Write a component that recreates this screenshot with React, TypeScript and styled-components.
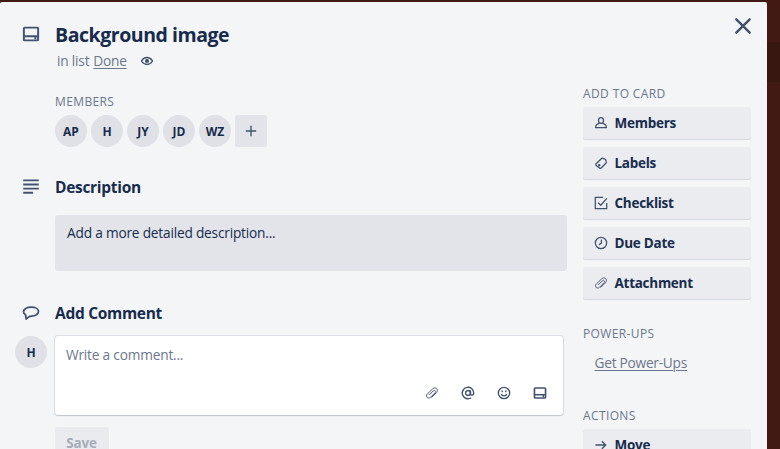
import React from 'react';
import styled, { createGlobalStyle } from 'styled-components';

const GlobalStyle = createGlobalStyle`
  *, *::before, *::after { box-sizing: border-box; }
  html, body { margin: 0; height: 100%; overflow: hidden; }
  body {
    background: linear-gradient(#421a13 0 42px, #381710 42px 82px, #421a13 82px);
    color: #172b4d;
    font: 400 13.7px/20px "Open Sans", "Noto Sans", sans-serif;
    letter-spacing: -0.2px;
  }
  h2, h3, h4, p { margin: 0; }
  button { font: inherit; color: inherit; border: 0; letter-spacing: inherit; }
`;

const CardWindow = styled.main`
  display: flex;
  width: 767px;
  height: 460px;
  margin-top: 2px;
  background: #f4f5f7;
  border-radius: 2px;
  overflow: hidden;
`;

const MainColumn = styled.div`
  width: 567px;
  flex: none;
  padding-top: 20px;
`;

const Section = styled.section<{ $gap: number }>`
  display: grid;
  grid-template-columns: 55px 1fr;
  margin-bottom: ${(p) => p.$gap}px;
`;

const Gutter = styled.div<{ $top: number }>`
  padding: ${(p) => p.$top}px 0 0 21.5px;
  color: #42526e;
  line-height: 0;
`;

const CardTitle = styled.h2`
  font-size: 19.5px;
  font-weight: 700;
  line-height: 26px;
  letter-spacing: -0.45px;
`;

const ListLine = styled.p`
  display: flex;
  align-items: center;
  gap: 4px;
  margin: 3px 0 0 2px;
  color: #6b778c;
`;

const PlainLink = styled.a`
  color: #6b778c;
  text-decoration: underline;
  text-decoration-thickness: 1px;
  text-underline-offset: 2px;
  letter-spacing: -0.25px;
`;

const WatchMark = styled.span`
  margin-left: 9px;
  line-height: 0;
  color: #42526e;
`;

const Label = styled.h4`
  height: 20px;
  color: #6b778c;
  font-size: 12px;
  font-weight: 500;
  line-height: 22px;
  letter-spacing: 0.38px;
`;

const MemberBlock = styled.div`
  margin: 20px 0 0;
`;

const MemberRow = styled.div`
  display: flex;
  gap: 4px;
  margin-top: 4px;
`;

const Avatar = styled.span`
  display: flex;
  align-items: center;
  justify-content: center;
  width: 32px;
  height: 32px;
  padding-top: 1px;
  border-radius: 50%;
  background: #dfe1e6;
  font-size: 12px;
  font-weight: 700;
  letter-spacing: 0;
`;

const AddMember = styled.button`
  display: flex;
  align-items: center;
  justify-content: center;
  width: 32px;
  height: 32px;
  padding: 0 1px 0 0;
  border-radius: 2px;
  background: #e2e4e9;
  color: #42526e;
`;

const Heading = styled.h3`
  font-size: 15.5px;
  font-weight: 700;
  line-height: 24px;
  letter-spacing: -0.3px;
`;

const DescriptionBox = styled.div`
  height: 56px;
  margin-top: 16px;
  padding: 8px 12px;
  border-radius: 3px;
  background: #e2e4e9;
`;

const CommentRow = styled.div`
  display: grid;
  grid-template-columns: 32px 508px;
  column-gap: 8px;
  padding-left: 15px;
`;

const CommentBox = styled.div`
  display: flex;
  flex-direction: column;
  justify-content: space-between;
  height: 79px;
  padding: 9px 16px 15px 11px;
  border-radius: 3px;
  background: #fff;
  color: #6b778c;
  box-shadow: 0 1px 2px -1px rgba(9, 30, 66, 0.4), 0 0 0 1px rgba(9, 30, 66, 0.1);
`;

const CommentTools = styled.div`
  display: flex;
  justify-content: flex-end;
  gap: 22px;
  color: #42526e;
  line-height: 0;
`;

const SaveButton = styled.button`
  grid-column: 2;
  width: 54px;
  height: 32px;
  margin-top: 12px;
  padding: 0 1px 0 0;
  border-radius: 3px;
  background: #e9ebee;
  color: #a5adba;
  font-size: 13.5px;
  font-weight: 700;
`;

const Sidebar = styled.aside`
  width: 184px;
  flex: none;
  padding: 12px 0 0 16px;
`;

const CloseButton = styled.button`
  display: flex;
  justify-content: flex-end;
  width: 171.5px;
  padding: 0;
  background: none;
  color: #42526e;
`;

const SideGroup = styled.section<{ $top: number }>`
  margin-top: ${(p) => p.$top}px;
`;

const SideButton = styled.button`
  display: flex;
  align-items: center;
  gap: 7px;
  width: 168px;
  height: 32px;
  margin-top: 8px;
  padding: 0 12px 0 10.5px;
  border-radius: 3px;
  background: #eaecef;
  box-shadow: 0 1px 0 rgba(9, 30, 66, 0.13);
  font-size: 13.5px;
  font-weight: 700;
  letter-spacing: -0.27px;

  svg { color: #42526e; flex: none; }

  ${Label} + & { margin-top: 4px; }
`;

const PowerUpsLine = styled.p`
  margin: 10px 0 0 11.5px;
`;

type IconName =
  | 'card' | 'eye' | 'plus' | 'lines' | 'comment' | 'clip' | 'at' | 'smile'
  | 'close' | 'member' | 'label' | 'check' | 'clock' | 'arrow';

const shapes: Record<IconName, React.ReactNode> = {
  card: (
    <>
      <rect x="2.5" y="3.5" width="19" height="17" rx="1.3" />
      <path d="M3 15h18M16.5 17.7h2.5" />
    </>
  ),
  eye: (
    <>
      <path d="M2.5 12C5 8 8.2 6.1 12 6.1S19 8 21.5 12C19 16 15.8 17.9 12 17.9S5 16 2.5 12Z" />
      <circle cx="12" cy="12" r="2.3" fill="currentColor" />
    </>
  ),
  plus: <path d="M12 3.2v17.6M3.2 12h17.6" />,
  lines: <path d="M1.7 4.5h20.6M1.7 10h20.6M1.7 15.5h20.6M1.7 21h13" />,
  comment: (
    <path d="M4.7 14.3C3.3 13.3 2 11.8 2 10.2 2 6.8 6.5 4.2 12.3 4.2S22 6.7 22 10s-4.2 6-9.2 6.1c-1.6 0-2.9.4-4.2 1.4l-3.1 2.5Z" />
  ),
  clip: (
    <path d="m11.2 19.8 8.4-8.4c2-2 2.2-5 .3-6.8s-4.8-1.8-6.7.1l-9.4 9.4c-1.6 1.6-1.6 4 0 5.5 1.5 1.5 3.9 1.5 5.5-.1l7.9-7.9c1.1-1.1 1.2-2.5.3-3.4s-2.3-.8-3.4.3l-6.8 6.8" />
  ),
  at: (
    <>
      <circle cx="12" cy="12" r="4.2" />
      <path d="M16.2 7.8v5.4c0 3.6 5.6 3.4 5.6-1.2a9.8 9.8 0 1 0-4.3 8.1" />
    </>
  ),
  smile: (
    <>
      <circle cx="12" cy="12" r="9.7" />
      <path d="M9 7.5v3.3M15 7.5v3.3M7.2 14c1.1 3.8 8.5 3.8 9.6 0" />
    </>
  ),
  close: <path d="m5.3 5.3 13.4 13.4M18.7 5.3 5.3 18.7" strokeLinecap="round" />,
  member: (
    <>
      <rect x="7.8" y="2.8" width="8.4" height="10" rx="4.2" />
      <path d="M8.5 13.2C5 13.8 2.8 15.8 2.8 20h18.4c0-4.2-2.2-6.2-5.7-6.8" />
    </>
  ),
  label: (
    <>
      <path d="m3.7 13.4 8.8-8.8c.8-.8 1.9-1 2.9-.6l3.5 1.5c.5.2.9.6 1.1 1.1l1 2.9c.4 1 .1 2.1-.6 2.9l-8.2 8.2c-.8.8-2 .8-2.8 0l-5.7-4.4c-.8-.8-.8-2 0-2.8Z" />
      <circle cx="9" cy="15.8" r="1" fill="currentColor" />
    </>
  ),
  check: (
    <>
      <path d="M15.5 2.2H2.2v19.6h19.6V12" />
      <path d="m6.8 11.3 4.7 4.5L22 4" />
    </>
  ),
  clock: (
    <>
      <circle cx="12" cy="12" r="9.7" />
      <path d="M12.7 6.2V12l-4.2 3.2" />
    </>
  ),
  arrow: <path d="M2.5 12H20M13.5 5.5 20 12l-6.5 6.5" />,
};

const Icon = ({ name, size = 14, weight = 2.4 }: { name: IconName; size?: number; weight?: number }) => (
  <svg
    width={size}
    height={size}
    viewBox="0 0 24 24"
    fill="none"
    stroke="currentColor"
    strokeWidth={weight}
    strokeLinejoin="round"
    aria-hidden="true"
  >
    {shapes[name]}
  </svg>
);

const members = ['AP', 'H', 'JY', 'JD', 'WZ'];

const cardActions: { icon: IconName; text: string }[] = [
  { icon: 'member', text: 'Members' },
  { icon: 'label', text: 'Labels' },
  { icon: 'check', text: 'Checklist' },
  { icon: 'clock', text: 'Due Date' },
  { icon: 'clip', text: 'Attachment' },
];

export default function App() {
  return (
    <>
      <GlobalStyle />
      <CardWindow>
        <MainColumn>
          <Section $gap={28}>
            <Gutter $top={3}><Icon name="card" size={18} weight={2.6} /></Gutter>
            <div>
              <CardTitle>Background image</CardTitle>
              <ListLine>
                in list <PlainLink>Done</PlainLink>
                <WatchMark><Icon name="eye" /></WatchMark>
              </ListLine>
              <MemberBlock>
                <Label>MEMBERS</Label>
                <MemberRow>
                  {members.map((m) => <Avatar key={m}>{m}</Avatar>)}
                  <AddMember aria-label="Add member"><Icon name="plus" /></AddMember>
                </MemberRow>
              </MemberBlock>
            </div>
          </Section>

          <Section $gap={30}>
            <Gutter $top={2}><Icon name="lines" size={18} weight={2.6} /></Gutter>
            <div>
              <Heading>Description</Heading>
              <DescriptionBox>Add a more detailed description...</DescriptionBox>
            </div>
          </Section>

          <Section $gap={11}>
            <Gutter $top={3}><Icon name="comment" size={18} /></Gutter>
            <Heading>Add Comment</Heading>
          </Section>
          <CommentRow>
            <Avatar>H</Avatar>
            <CommentBox>
              Write a comment...
              <CommentTools>
                <Icon name="clip" weight={1.7} />
                <Icon name="at" />
                <Icon name="smile" />
                <Icon name="card" weight={2.8} />
              </CommentTools>
            </CommentBox>
            <SaveButton disabled>Save</SaveButton>
          </CommentRow>
        </MainColumn>

        <Sidebar>
          <CloseButton aria-label="Close"><Icon name="close" size={24} weight={2.4} /></CloseButton>
          <SideGroup $top={45}>
            <Label>ADD TO CARD</Label>
            {cardActions.map(({ icon, text }) => (
              <SideButton key={text}>
                <Icon name={icon} weight={icon === 'clip' ? 1.6 : 2.2} />
                {text}
              </SideButton>
            ))}
          </SideGroup>
          <SideGroup $top={24}>
            <Label>POWER-UPS</Label>
            <PowerUpsLine><PlainLink>Get Power-Ups</PlainLink></PowerUpsLine>
          </SideGroup>
          <SideGroup $top={32}>
            <Label>ACTIONS</Label>
            <SideButton><Icon name="arrow" />Move</SideButton>
          </SideGroup>
        </Sidebar>
      </CardWindow>
    </>
  );
}
